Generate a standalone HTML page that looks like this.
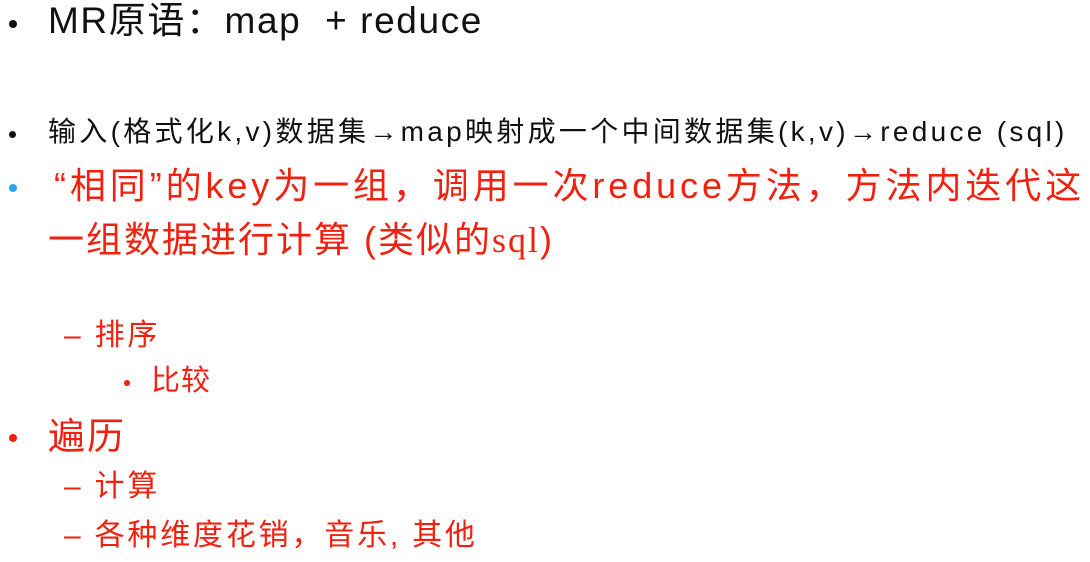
<html><head><style>
body{margin:0;width:1090px;height:562px;background:#fff;overflow:hidden;position:relative;font-family:"Liberation Sans","Noto Sans CJK SC",sans-serif;}
.l{position:absolute;white-space:nowrap;line-height:1;}
.r{color:#f2200e;}
.b{position:absolute;border-radius:50%;}
</style></head><body>
<div class="b" style="left:9px;top:20px;width:8px;height:8px;background:#111"></div>
<div class="l" style="left:48px;top:2px;font-size:37px;color:#111;letter-spacing:1.6px">MR原语：map&nbsp; + reduce</div>
<div class="b" style="left:9px;top:131px;width:7px;height:7px;background:#111"></div>
<div class="l" style="left:48px;top:118px;font-size:28px;color:#111;letter-spacing:3.3px">输入(格式化k,v)数据集→map映射成一个中间数据集(k,v)→reduce (sql)</div>
<div class="b" style="left:9px;top:184px;width:8px;height:8px;background:#2aa3e8"></div>
<div class="l r" style="left:54px;top:168px;font-size:36px;letter-spacing:3.9px">“相同”的key为一组，调用一次reduce方法，方法内迭代这</div>
<div class="l r" style="left:48px;top:222px;font-size:36px;letter-spacing:2px">一组数据进行计算 (类似的<span style="font-family:'Liberation Serif',serif">sql</span>)</div>
<div class="l r" style="left:64px;top:321px;font-size:30px;letter-spacing:2.8px">– 排序</div>
<div class="b" style="left:124px;top:380px;width:6px;height:6px;background:#f2200e"></div>
<div class="l r" style="left:151px;top:367px;font-size:29px;letter-spacing:1px">比较</div>
<div class="b" style="left:9px;top:434px;width:8px;height:8px;background:#f2200e"></div>
<div class="l r" style="left:48px;top:418px;font-size:37px;letter-spacing:2px">遍历</div>
<div class="l r" style="left:64px;top:472px;font-size:30px;letter-spacing:2.8px">– 计算</div>
<div class="l r" style="left:64px;top:521px;font-size:30px;letter-spacing:2.8px">– 各种维度花销，音乐, 其他</div>
</body></html>
